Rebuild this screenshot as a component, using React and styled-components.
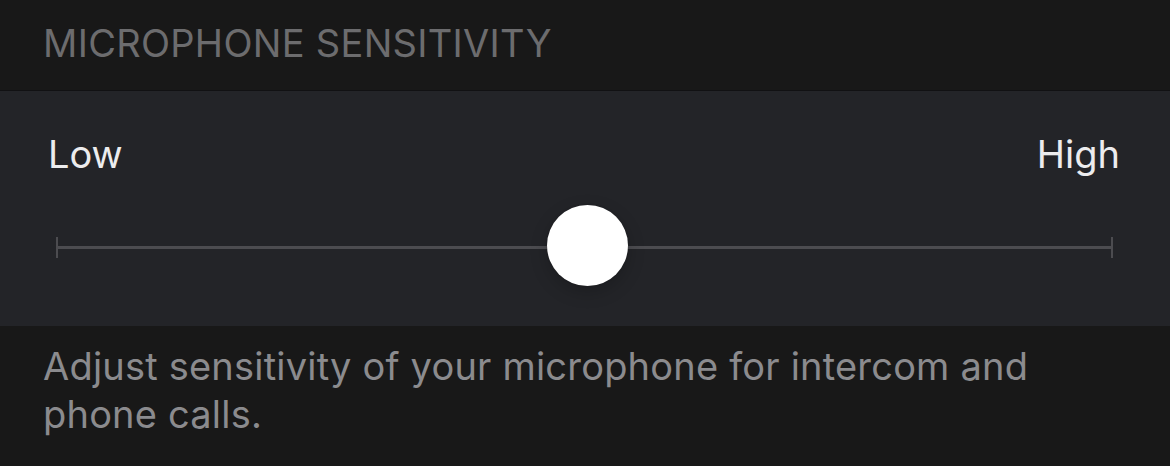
import React, { useState } from "react";
import styled, { createGlobalStyle } from "styled-components";

const Global = createGlobalStyle`
  html, body { margin: 0; padding: 0; background: #181818; }
  body { font-family: Inter, "Noto Sans", sans-serif; -webkit-font-smoothing: antialiased; }
`;

const Page = styled.div`
  width: 1170px;
  height: 466px;
  background: #181818;
  display: flex;
  flex-direction: column;
  overflow: hidden;
`;

const SectionHeader = styled.div`
  height: 90px;
  box-sizing: border-box;
  padding: 20px 0 0 43px;
  font-size: 38px;
  line-height: 46px;
  color: #6c6c6e;
  letter-spacing: 0.3px;
`;

const Panel = styled.div`
  height: 236px;
  box-sizing: border-box;
  background: #232428;
  border-top: 1px solid #111113;
  padding: 0 50px 0 48px;
  display: flex;
  flex-direction: column;
`;

const Labels = styled.div`
  display: flex;
  justify-content: space-between;
  padding-top: 39px;
  font-size: 38px;
  line-height: 48px;
  color: #ececee;
`;

const SliderRow = styled.div`
  position: relative;
  height: 80px;
  margin: 27px 7px 0 8px;
`;

const Track = styled.div`
  position: absolute;
  left: 0;
  right: 0;
  top: 41px;
  height: 3px;
  background: #4c4c50;
`;

const Tick = styled.div`
  position: absolute;
  top: 32px;
  ${(p) => (p.$side === "left" ? "left: 0;" : "right: 0;")}
  width: 2px;
  height: 21px;
  background: #4c4c50;
`;

const Thumb = styled.div`
  position: absolute;
  top: 0;
  width: 81px;
  height: 81px;
  margin-left: -40px;
  border-radius: 50%;
  background: #ffffff;
  box-shadow: 0 6px 18px rgba(0, 0, 0, 0.2), 0 0 2px rgba(0, 0, 0, 0.2);
`;

const Footer = styled.div`
  padding: 16px 43px 0 43px;
  font-size: 38px;
  line-height: 48px;
  color: #8b8b8e;
  letter-spacing: 0.2px;
`;

export default function App() {
  const [value] = useState(0.502);
  return (
    <>
      <Global />
      <Page>
        <SectionHeader>MICROPHONE SENSITIVITY</SectionHeader>
        <Panel>
          <Labels>
            <span>Low</span>
            <span>High</span>
          </Labels>
          <SliderRow>
            <Track />
            <Tick $side="left" />
            <Tick $side="right" />
            <Thumb style={{ left: `${value * 100}%` }} />
          </SliderRow>
        </Panel>
        <Footer>
          Adjust sensitivity of your microphone for intercom and
          <br />
          phone calls.
        </Footer>
      </Page>
    </>
  );
}
